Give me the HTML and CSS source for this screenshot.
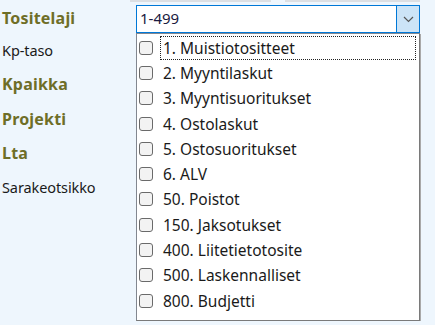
FILE: index.html
```html
<!DOCTYPE html>
<html lang="fi">
<head>
    <meta charset="UTF-8">
    <title>Tositelaji</title>
    <link rel="stylesheet" href="styles.css">
</head>
<body>
    <div class="top-strip">
        <div class="strip strip-a"></div>
        <div class="strip strip-b"></div>
    </div>
    <div class="report-form">
        <!-- Left labels -->
        <div class="labels">
            <div class="label bold first">Tositelaji</div>
            <div class="label">Kp-taso</div>
            <div class="label bold">Kpaikka</div>
            <div class="label bold">Projekti</div>
            <div class="label bold">Lta</div>
            <div class="label">Sarakeotsikko</div>
        </div>

        <!-- Combo box with open list -->
        <div class="combo-wrap">
            <div class="combo">
                <span class="combo-value">1-499</span>
                <span class="combo-btn">
                    <svg width="11" height="7" viewBox="0 0 11 7"><path d="M1 1 L5.5 5.5 L10 1" fill="none" stroke="#555" stroke-width="1.2"/></svg>
                </span>
            </div>
            <div class="drop-list">
                <div class="item focused"><span class="box"></span><span class="txt">1. Muistiotositteet</span></div>
                <div class="item"><span class="box"></span><span class="txt">2. Myyntilaskut</span></div>
                <div class="item"><span class="box"></span><span class="txt">3. Myyntisuoritukset</span></div>
                <div class="item"><span class="box"></span><span class="txt">4. Ostolaskut</span></div>
                <div class="item"><span class="box"></span><span class="txt">5. Ostosuoritukset</span></div>
                <div class="item"><span class="box"></span><span class="txt">6. ALV</span></div>
                <div class="item"><span class="box"></span><span class="txt">50. Poistot</span></div>
                <div class="item"><span class="box"></span><span class="txt">150. Jaksotukset</span></div>
                <div class="item"><span class="box"></span><span class="txt">400. Liitetietotosite</span></div>
                <div class="item"><span class="box"></span><span class="txt">500. Laskennalliset</span></div>
                <div class="item"><span class="box"></span><span class="txt">800. Budjetti</span></div>
            </div>
        </div>
    </div>
</body>
</html>
```

FILE: styles.css
```css
/* Form styles */
body {
    margin: 0;
    background-color: #eef6fd;
    font-family: "Noto Sans", "Open Sans", sans-serif;
    font-size: 14px;
    color: #1a1a1a;
    overflow: hidden;
}

.top-strip {
    display: flex;
    height: 2px;
    padding-left: 130px;
    gap: 14px;
}

.strip {
    background-color: #dcdfe3;
    height: 2px;
}

.strip-a {
    width: 141px;
}

.strip-b {
    width: 135px;
}

.report-form {
    display: flex;
    padding-top: 3px;
}

.labels {
    width: 134px;
    padding-left: 2px;
}

.label {
    height: 34.3px;
    line-height: 20px;
    padding-top: 6px;
    box-sizing: border-box;
    font-size: 14.5px;
    letter-spacing: -0.1px;
}

.label.first {
    height: 29px;
    padding-top: 3px;
}

.label.bold {
    font-weight: bold;
    font-size: 16px;
    letter-spacing: 0.2px;
    color: #6e6e27;
}

.combo-wrap {
    width: 284px;
}

.combo {
    display: flex;
    height: 28px;
    border: 1px solid #0078d7;
    box-sizing: border-box;
    background-color: #fff;
}

.combo-value {
    flex: 1;
    padding-left: 3px;
    line-height: 25px;
    font-size: 15px;
    color: #1a1a40;
}

.combo-btn {
    width: 22px;
    background-color: #cce4f7;
    border-left: 1px solid #0078d7;
    display: flex;
    align-items: center;
    justify-content: center;
}

.drop-list {
    height: 288px;
    background-color: #fff;
    border: 1px solid #828790;
    border-right-color: #7a7a7a;
    border-bottom-color: #7a7a7a;
    box-sizing: border-box;
    padding: 1px 2px 0 1px;
    box-shadow: 1px 1px 0 #a9a9a9;
}

.item {
    display: flex;
    align-items: center;
    height: 25.3px;
}

.box {
    width: 14px;
    height: 14px;
    margin-left: 1px;
    border: 1px solid #6a6a6a;
    border-radius: 3px;
    background-color: #f3f3f3;
    box-sizing: border-box;
    flex-shrink: 0;
}

.txt {
    margin-left: 7px;
    padding: 0 2px;
    line-height: 22px;
    flex: 1;
    font-size: 15.5px;
    border: 1px dotted transparent;
}

.item.focused .txt {
    border-color: #222;
    margin-right: 1px;
}
```
